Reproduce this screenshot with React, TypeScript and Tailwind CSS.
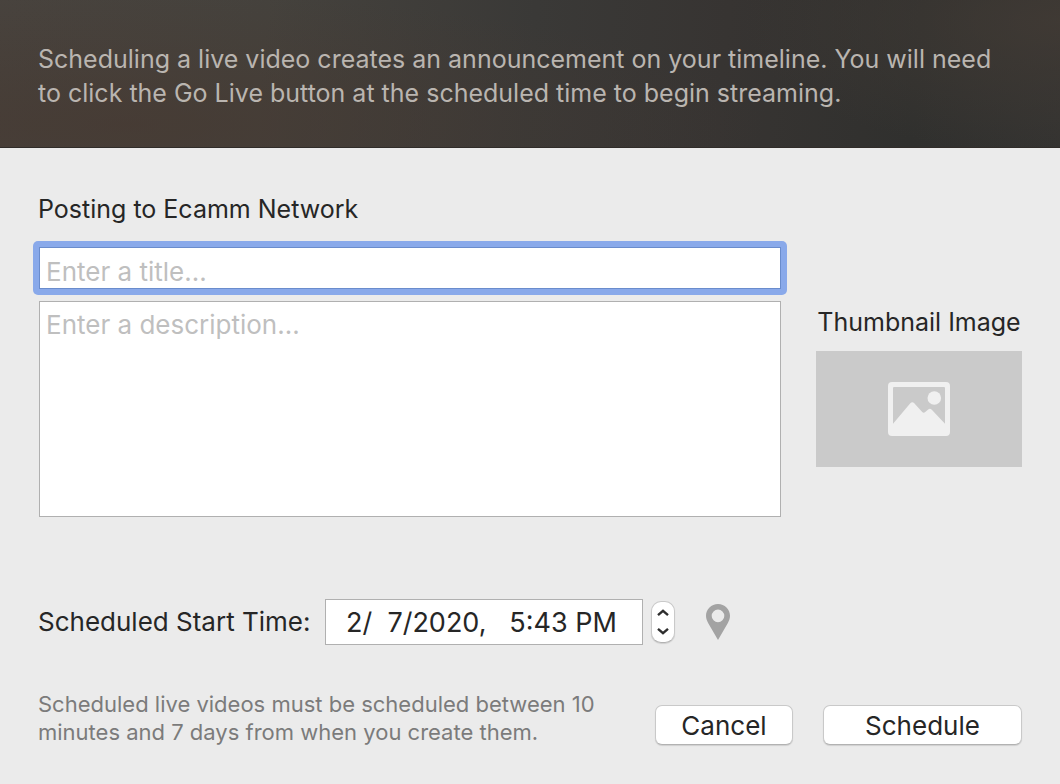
import { useState } from "react";

function ImageIcon() {
  return (
    <svg viewBox="0 0 62 54" className="h-[54px] w-[62px]" aria-hidden="true">
      <path
        fill="#f0f0f0"
        fillRule="evenodd"
        d="M4 0H58A4 4 0 0 1 62 4V50A4 4 0 0 1 58 54H4A4 4 0 0 1 0 50V4A4 4 0 0 1 4 0ZM6 5A1 1 0 0 0 5 6V41.800L22.300 21.300Q24.300 19 26.300 21.300L34.200 30Q35.700 31.500 37.200 30L40.200 27.500Q42 26 43.800 27.800L57 41.800V6A1 1 0 0 0 56 5Z"
      />
      <circle cx="46.300" cy="16" r="6.800" fill="#f0f0f0" />
    </svg>
  );
}

function PinIcon() {
  return (
    <svg viewBox="0 0 24 36" className="h-9 w-6" aria-hidden="true">
      <path
        fill="#a3a3a3"
        fillRule="evenodd"
        d="M12 0C5.300 0 0 5.200 0 11.800C0 14.600 1 17 2.400 19.400L12 36L21.600 19.400C23 17 24 14.600 24 11.800C24 5.200 18.700 0 12 0ZM12 5.600A6.300 6.300 0 1 1 12 18.200A6.300 6.300 0 1 1 12 5.600Z"
      />
    </svg>
  );
}

function Chevron({ up }: { up?: boolean }) {
  return (
    <svg viewBox="0 0 12 8" className="h-2 w-3" aria-hidden="true">
      <path
        d={up ? "M1 6.200L6 1.800L11 6.200" : "M1 1.800L6 6.200L11 1.800"}
        fill="none"
        stroke="#2e2e2e"
        strokeWidth="2.400"
      />
    </svg>
  );
}

const fieldClass =
  "block w-full border bg-white px-1.5 text-[26px] text-[#262626] outline-none placeholder:text-[#bfbfbf]";
const raisedClass =
  "border border-[#c9c9c9] border-b-[#b2b2b2] bg-white shadow-[0_1px_1px_rgba(0,0,0,0.12)]";
const buttonClass = `${raisedClass} h-10 rounded-[7px] text-[26px] leading-10`;

export default function App() {
  const [title, setTitle] = useState("");
  const [description, setDescription] = useState("");
  const [start, setStart] = useState("2/  7/2020,   5:43 PM");

  return (
    <div className="flex min-h-screen flex-col bg-[#ebebeb] font-['Inter',sans-serif] text-[25px] leading-[34px] text-[#262626]">
      <header className="border-b border-[#302c29] bg-[radial-gradient(ellipse_60%_90%_at_12%_85%,rgba(70,56,48,0.65)_0%,transparent_100%),radial-gradient(ellipse_30%_90%_at_100%_15%,rgba(66,59,53,0.8)_0%,transparent_100%),linear-gradient(95deg,#48433e_0%,#45423d_25%,#3a3937_50%,#373432_68%,#30302e_86%,#343331_100%)] py-[42px] pr-12 pb-[37px] pl-[38px] text-[#bab5b0]">
        <p>
          Scheduling a live video creates an announcement on your timeline. You
          will need to click the Go Live button at the scheduled time to begin
          streaming.
        </p>
      </header>

      <main className="px-[38px] pt-11 pb-9">
        <h1>Posting to Ecamm Network</h1>

        <div className="mt-[21px] flex gap-[35px]">
          <div className="flex min-w-0 flex-1 flex-col gap-3 pl-px">
            <div className="-m-1.5 rounded-[5px] bg-[#89a9ea] p-1.5">
              <input
                type="text"
                aria-label="Title"
                placeholder="Enter a title..."
                value={title}
                onChange={(e) => setTitle(e.target.value)}
                className={`${fieldClass} h-[42px] border-[#6a8ccc] pt-1.5`}
              />
            </div>
            <textarea
              aria-label="Description"
              placeholder="Enter a description..."
              value={description}
              onChange={(e) => setDescription(e.target.value)}
              className={`${fieldClass} h-[216px] resize-none border-[#b0b0b0] pt-1.5 leading-[34px]`}
            />
          </div>
          <div className="mt-[58px] w-[206px] shrink-0">
            <h2 className="text-center whitespace-nowrap">Thumbnail Image</h2>
            <button
              type="button"
              aria-label="Choose thumbnail image"
              className="mt-3 flex h-[116px] w-full items-center justify-center bg-[#cacaca]"
            >
              <ImageIcon />
            </button>
          </div>
        </div>

        <div className="mt-[82px] flex items-center">
          <label
            htmlFor="start"
            className="w-[287px] text-[26px] whitespace-nowrap"
          >
            Scheduled Start Time:
          </label>
          <input
            id="start"
            type="text"
            value={start}
            onChange={(e) => setStart(e.target.value)}
            className="h-[46px] w-[318px] border border-[#b0b0b0] bg-white pl-5 text-[27px] outline-none"
          />
          <div
            className={`${raisedClass} ml-2 flex h-[42px] w-6 flex-col rounded-[10px]`}
          >
            <button
              type="button"
              aria-label="Later"
              className="flex flex-1 items-center justify-center pt-0.5"
            >
              <Chevron up />
            </button>
            <button
              type="button"
              aria-label="Earlier"
              className="flex flex-1 items-center justify-center pb-0.5"
            >
              <Chevron />
            </button>
          </div>
          <button type="button" aria-label="Add location" className="ml-[31px]">
            <PinIcon />
          </button>
        </div>

        <div className="mt-[45px] flex items-start justify-between">
          <p className="w-[580px] text-[22px] leading-7 text-[#7b7b7b]">
            Scheduled live videos must be scheduled between 10 minutes and 7
            days from when you create them.
          </p>
          <div className="mt-[15px] flex gap-[30px]">
            <button type="button" className={`${buttonClass} w-[138px]`}>
              Cancel
            </button>
            <button type="button" className={`${buttonClass} w-[199px]`}>
              Schedule
            </button>
          </div>
        </div>
      </main>
    </div>
  );
}
